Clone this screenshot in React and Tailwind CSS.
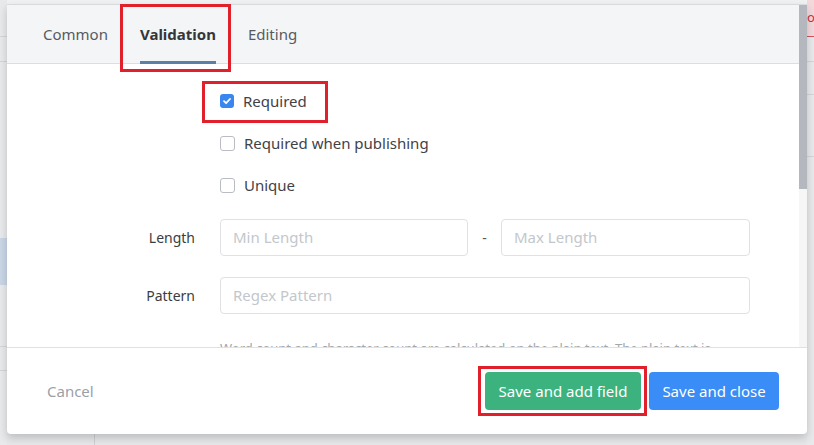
import React from "react";

const font = { fontFamily: '"Noto Sans", "Open Sans", sans-serif' };

function Check({ checked, label }) {
  return (
    <div className="flex h-[42px] items-center gap-[9px]">
      {checked ? (
        <span className="flex h-[14px] w-[14px] items-center justify-center rounded-[3px] bg-[#3a86f0]">
          <svg width="10" height="10" viewBox="0 0 10 10">
            <path d="M2 5.2 L4.1 7.2 L8 3" fill="none" stroke="white" strokeWidth="1.8" strokeLinecap="round" strokeLinejoin="round" />
          </svg>
        </span>
      ) : (
        <span className="h-[15px] w-[15px] rounded-[3px] border border-[#b9bdc3] bg-white" />
      )}
      <span className="text-[15px] text-[#3f4247]">{label}</span>
    </div>
  );
}

function Input({ placeholder, className }) {
  return (
    <div className={"flex h-[37px] items-center rounded-[4px] border border-[#dfe1e5] px-[12px] text-[15px] text-[#c3c7cc] " + className}>
      {placeholder}
    </div>
  );
}

export default function App() {
  return (
    <div className="relative flex h-[445px] w-[814px] overflow-hidden bg-[#e6e7e9]" style={font}>
      {/* left page strip */}
      <div className="flex w-[7px] flex-col bg-[#e8e9eb]">
        <div className="h-[37px] border-b border-[#d4d5d8]" />
        <div className="h-[25px] border-b border-[#d4d5d8]" />
        <div className="h-[176px]" />
        <div className="h-[47px] bg-[#c9d6e6]" />
        <div className="h-[62px] border-b border-[#d4d5d8]" />
        <div className="h-[24px] border-b border-[#d4d5d8]" />
      </div>

      {/* center: modal */}
      <div className="flex w-[800px] flex-col">
        <div className="h-[4px] bg-[#f0f1f2]" />
        <div className="relative z-10 flex h-[430px] flex-col rounded-b-[4px] bg-white shadow-[0_4px_8px_rgba(0,0,0,0.18)]">
          <div className="flex h-[343px] border-t border-[#d8dadd]">
            <div className="flex flex-1 flex-col overflow-hidden">
              {/* tabs */}
              <div className="flex h-[59px] shrink-0 border-b border-[#dcdee1] bg-[#f4f5f7] pl-[20px]">
                <div className="flex h-full items-center px-[16px] text-[15px] text-[#575b61]">Common</div>
                <div className="relative flex h-full items-center px-[16px] text-[15px] font-bold text-[#33363a]">
                  Validation
                  <span className="absolute bottom-[-1px] left-[16px] right-[16px] h-[3px] bg-[#5b80a6]" />
                </div>
                <div className="flex h-full items-center px-[16px] text-[15px] text-[#575b61]">Editing</div>
              </div>
              {/* body */}
              <div className="flex flex-col pt-[16px]">
                <div className="flex flex-col pl-[213px]">
                  <Check checked label="Required" />
                  <Check label="Required when publishing" />
                  <Check label="Unique" />
                </div>
                <div className="mt-[13px] flex items-center">
                  <div className="w-[188px] text-right text-[14px] text-[#3a3d42]">Length</div>
                  <div className="ml-[25px] flex w-[530px] items-center">
                    <Input placeholder="Min Length" className="w-[248px]" />
                    <div className="w-[33px] text-center text-[14px] text-[#55585d]">-</div>
                    <Input placeholder="Max Length" className="w-[249px]" />
                  </div>
                </div>
                <div className="mt-[21px] flex items-center">
                  <div className="w-[188px] text-right text-[14px] text-[#3a3d42]">Pattern</div>
                  <Input placeholder="Regex Pattern" className="ml-[25px] w-[530px]" />
                </div>
                <div className="ml-[213px] mt-[25px] whitespace-nowrap text-[13px] text-[#a3a7ac]">
                  Word count and character count are calculated on the plain text. The plain text is
                </div>
              </div>
            </div>
            {/* scrollbar */}
            <div className="flex w-[8px] flex-col bg-[#f6f6f7]">
              <div className="h-[184px] bg-[#b4b8be]" />
            </div>
          </div>
          {/* footer */}
          <div className="flex flex-1 items-center border-t border-[#dfe1e4] pl-[40px] pr-[28px]">
            <span className="text-[15px] text-[#9ba0a7]">Cancel</span>
            <div className="ml-auto flex gap-[8px]">
              <div className="flex h-[38px] w-[156px] items-center justify-center rounded-[4px] bg-[#3cb37e] text-[15px] text-white">
                Save and add field
              </div>
              <div className="flex h-[38px] w-[130px] items-center justify-center rounded-[4px] bg-[#3a8cf6] text-[15px] text-white">
                Save and close
              </div>
            </div>
          </div>
        </div>
        <div className="flex flex-1">
          <div className="w-[87px]" />
          <div className="w-px bg-[#cfd0d3]" />
        </div>
      </div>

      {/* right page strip */}
      <div className="flex w-[7px] flex-col bg-[#e8e9eb]">
        <div className="flex h-[37px] items-center overflow-hidden border-b border-[#d2545e] bg-[#f4d9dc] text-[13px] text-[#c8323e]">ou</div>
        <div className="h-[25px] border-b border-[#d4d5d8]" />
        <div className="h-[33px] border-b border-[#d4d5d8]" />
        <div className="h-[62px] border-b border-[#d4d5d8]" />
      </div>

      {/* annotation boxes */}
      <div className="absolute left-[120px] top-[4px] z-20 h-[68px] w-[111px] border-[3px] border-[#e0212b]" />
      <div className="absolute left-[202px] top-[81px] z-20 h-[42px] w-[126px] border-[3px] border-[#e0212b]" />
      <div className="absolute left-[478px] top-[366px] z-20 h-[50px] w-[169px] border-[3px] border-[#e0212b]" />
    </div>
  );
}
